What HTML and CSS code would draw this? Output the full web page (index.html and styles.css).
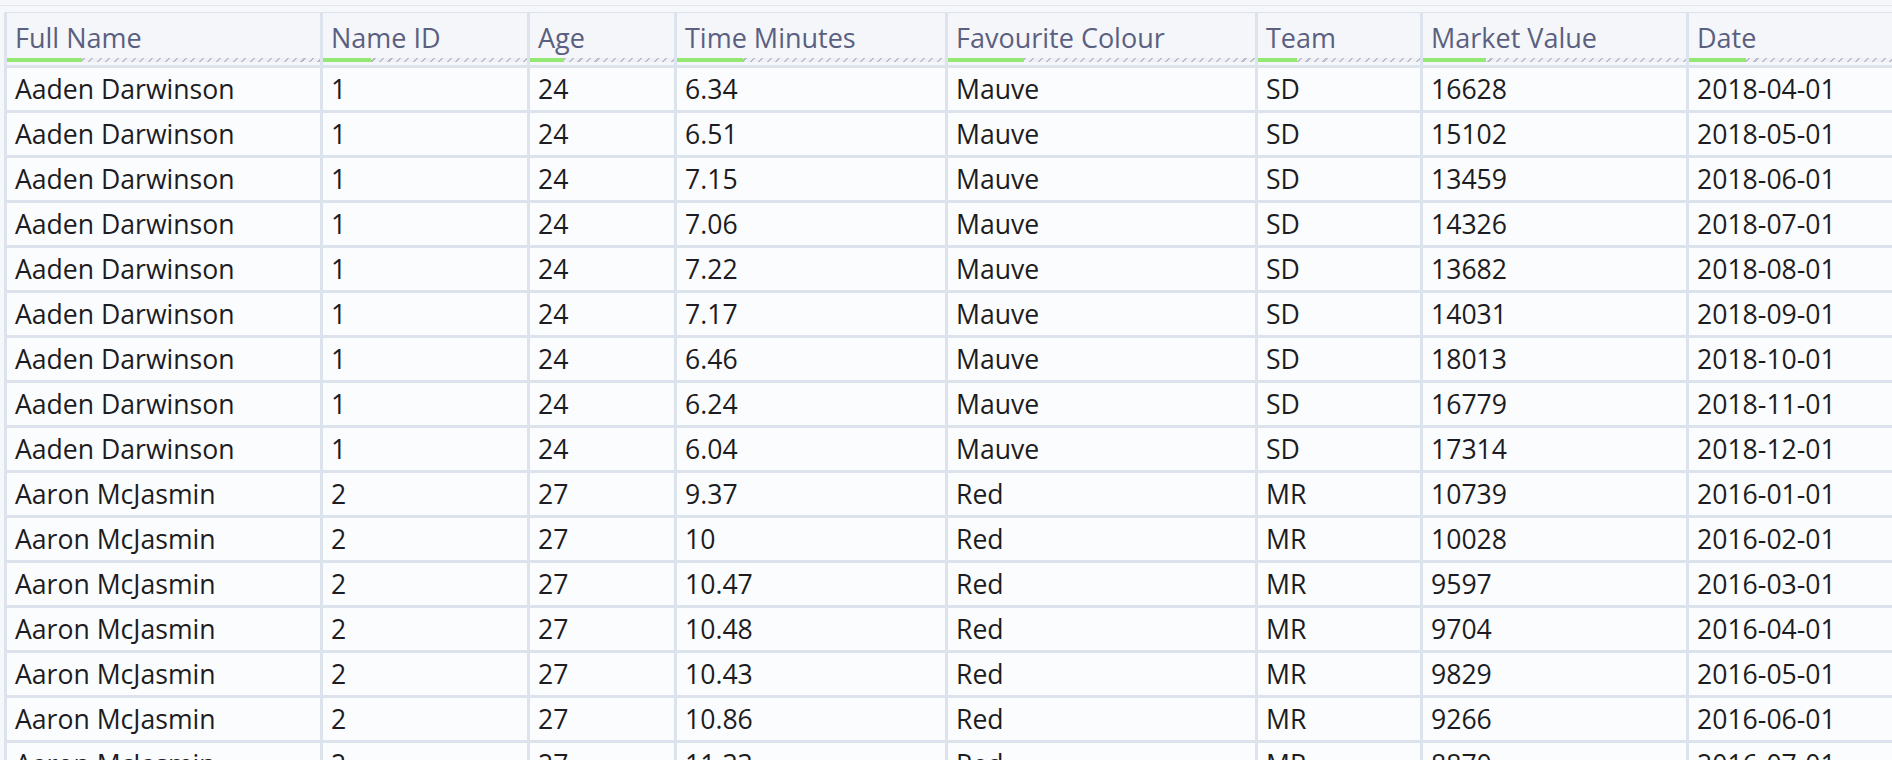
FILE: index.html
```html
<!DOCTYPE html>
<html>
<head>
<meta charset="utf-8">
<link rel="stylesheet" href="styles.css">
</head>
<body>
<div class="top"></div>
<div class="rule"></div>
<div class="grid">
  <div class="hcell"><div class="hlabel">Full Name</div><div class="hbar"><span class="fill" style="width:75px"></span></div></div>
  <div class="hcell"><div class="hlabel">Name ID</div><div class="hbar"><span class="fill" style="width:48px"></span></div></div>
  <div class="hcell"><div class="hlabel">Age</div><div class="hbar"><span class="fill" style="width:34px"></span></div></div>
  <div class="hcell"><div class="hlabel">Time Minutes</div><div class="hbar"><span class="fill" style="width:66px"></span></div></div>
  <div class="hcell"><div class="hlabel">Favourite Colour</div><div class="hbar"><span class="fill" style="width:76px"></span></div></div>
  <div class="hcell"><div class="hlabel">Team</div><div class="hbar"><span class="fill" style="width:39px"></span></div></div>
  <div class="hcell"><div class="hlabel">Market Value</div><div class="hbar"><span class="fill" style="width:63px"></span></div></div>
  <div class="hcell"><div class="hlabel">Date</div><div class="hbar"><span class="fill" style="width:57px"></span></div></div>

  <div class="cell">Aaden Darwinson</div><div class="cell">1</div><div class="cell">24</div><div class="cell">6.34</div><div class="cell">Mauve</div><div class="cell">SD</div><div class="cell">16628</div><div class="cell">2018-04-01</div>
  <div class="cell">Aaden Darwinson</div><div class="cell">1</div><div class="cell">24</div><div class="cell">6.51</div><div class="cell">Mauve</div><div class="cell">SD</div><div class="cell">15102</div><div class="cell">2018-05-01</div>
  <div class="cell">Aaden Darwinson</div><div class="cell">1</div><div class="cell">24</div><div class="cell">7.15</div><div class="cell">Mauve</div><div class="cell">SD</div><div class="cell">13459</div><div class="cell">2018-06-01</div>
  <div class="cell">Aaden Darwinson</div><div class="cell">1</div><div class="cell">24</div><div class="cell">7.06</div><div class="cell">Mauve</div><div class="cell">SD</div><div class="cell">14326</div><div class="cell">2018-07-01</div>
  <div class="cell">Aaden Darwinson</div><div class="cell">1</div><div class="cell">24</div><div class="cell">7.22</div><div class="cell">Mauve</div><div class="cell">SD</div><div class="cell">13682</div><div class="cell">2018-08-01</div>
  <div class="cell">Aaden Darwinson</div><div class="cell">1</div><div class="cell">24</div><div class="cell">7.17</div><div class="cell">Mauve</div><div class="cell">SD</div><div class="cell">14031</div><div class="cell">2018-09-01</div>
  <div class="cell">Aaden Darwinson</div><div class="cell">1</div><div class="cell">24</div><div class="cell">6.46</div><div class="cell">Mauve</div><div class="cell">SD</div><div class="cell">18013</div><div class="cell">2018-10-01</div>
  <div class="cell">Aaden Darwinson</div><div class="cell">1</div><div class="cell">24</div><div class="cell">6.24</div><div class="cell">Mauve</div><div class="cell">SD</div><div class="cell">16779</div><div class="cell">2018-11-01</div>
  <div class="cell">Aaden Darwinson</div><div class="cell">1</div><div class="cell">24</div><div class="cell">6.04</div><div class="cell">Mauve</div><div class="cell">SD</div><div class="cell">17314</div><div class="cell">2018-12-01</div>
  <div class="cell">Aaron McJasmin</div><div class="cell">2</div><div class="cell">27</div><div class="cell">9.37</div><div class="cell">Red</div><div class="cell">MR</div><div class="cell">10739</div><div class="cell">2016-01-01</div>
  <div class="cell">Aaron McJasmin</div><div class="cell">2</div><div class="cell">27</div><div class="cell">10</div><div class="cell">Red</div><div class="cell">MR</div><div class="cell">10028</div><div class="cell">2016-02-01</div>
  <div class="cell">Aaron McJasmin</div><div class="cell">2</div><div class="cell">27</div><div class="cell">10.47</div><div class="cell">Red</div><div class="cell">MR</div><div class="cell">9597</div><div class="cell">2016-03-01</div>
  <div class="cell">Aaron McJasmin</div><div class="cell">2</div><div class="cell">27</div><div class="cell">10.48</div><div class="cell">Red</div><div class="cell">MR</div><div class="cell">9704</div><div class="cell">2016-04-01</div>
  <div class="cell">Aaron McJasmin</div><div class="cell">2</div><div class="cell">27</div><div class="cell">10.43</div><div class="cell">Red</div><div class="cell">MR</div><div class="cell">9829</div><div class="cell">2016-05-01</div>
  <div class="cell">Aaron McJasmin</div><div class="cell">2</div><div class="cell">27</div><div class="cell">10.86</div><div class="cell">Red</div><div class="cell">MR</div><div class="cell">9266</div><div class="cell">2016-06-01</div>
  <div class="cell">Aaron McJasmin</div><div class="cell">2</div><div class="cell">27</div><div class="cell">11.33</div><div class="cell">Red</div><div class="cell">MR</div><div class="cell">8870</div><div class="cell">2016-07-01</div>
</div>
</body>
</html>
```

FILE: styles.css
```css
html, body {
  margin: 0;
  padding: 0;
  height: 760px;
  overflow: hidden;
  background: #f5f7fb;
  font-family: "Open Sans", "Noto Sans", sans-serif;
}
.top {
  height: 5px;
}
.rule {
  height: 1px;
  background: #e2e6ef;
  margin-bottom: 6px;
}
.grid {
  display: grid;
  grid-template-columns: 313px 204px 144px 268px 307px 162px 263px 1fr;
  grid-auto-rows: 42px;
  grid-template-rows: 52px;
  column-gap: 3px;
  row-gap: 3px;
  margin-left: 4px;
  padding-left: 3px;
  padding-top: 1px;
  background: #dde3ed;
}
.hcell {
  background: #f4f6fa;
  display: flex;
  flex-direction: column;
}
.hlabel {
  height: 45px;
  line-height: 49px;
  padding-left: 8px;
  font-size: 27px;
  color: #5b5f80;
  white-space: nowrap;
  overflow: hidden;
}
.hbar {
  height: 4px;
  display: flex;
  background: repeating-linear-gradient(135deg, #b9bdc7 0 1.5px, #eef0f5 1.5px 6px);
}
.fill {
  height: 4px;
  background: #93e873;
}
.cell {
  background: #fbfcfe;
  font-size: 26.6px;
  line-height: 42px;
  padding-left: 8px;
  color: #1c1c22;
  white-space: nowrap;
  overflow: hidden;
}
```
